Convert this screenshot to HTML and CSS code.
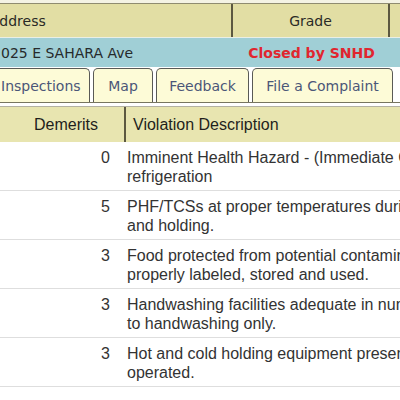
FILE: index.html
```html
<!DOCTYPE html>
<html lang="en">
<head>
<meta charset="utf-8">
<title>Inspection</title>
<link rel="stylesheet" href="styles.css">
</head>
<body>
<div class="page">
  <div class="topstrip"></div>
  <div class="summary">
    <div class="sum-row sum-head">
      <div class="col-addr">Address</div>
      <div class="col-grade">Grade</div>
      <div class="col-rest"></div>
    </div>
    <div class="sum-row sum-data">
      <div class="col-addr addr-value">025 E SAHARA Ave</div>
      <div class="col-grade closed">Closed by SNHD</div>
      <div class="col-rest"></div>
    </div>
  </div>
  <div class="tabs">
    <div class="tab tab-insp">Inspections</div>
    <div class="tab tab-map">Map</div>
    <div class="tab tab-feed">Feedback</div>
    <div class="tab tab-file">File a Complaint</div>
  </div>
  <div class="vtable">
    <div class="vrow vhead">
      <div class="dem">Demerits</div>
      <div class="desc">Violation Description</div>
    </div>
    <div class="vrow">
      <div class="dem">0</div>
      <div class="desc">Imminent Health Hazard - (Immediate Closure)<br>refrigeration</div>
    </div>
    <div class="vrow">
      <div class="dem">5</div>
      <div class="desc">PHF/TCSs at proper temperatures during<br>and holding.</div>
    </div>
    <div class="vrow">
      <div class="dem">3</div>
      <div class="desc">Food protected from potential contamination<br>properly labeled, stored and used.</div>
    </div>
    <div class="vrow">
      <div class="dem">3</div>
      <div class="desc">Handwashing facilities adequate in number<br>to handwashing only.</div>
    </div>
    <div class="vrow">
      <div class="dem">3</div>
      <div class="desc">Hot and cold holding equipment present<br>operated.</div>
    </div>
  </div>
</div>
</body>
</html>
```
FILE: styles.css
```css
html, body {
  margin: 0;
  padding: 0;
  height: 100%;
  overflow: hidden;
  background: #ffffff;
}

.page {
  margin-left: -12px;
  width: 460px;
}

.topstrip {
  height: 3px;
  background: #f4f3e4;
}

.summary {
  font-family: "DejaVu Sans", Verdana, sans-serif;
  font-size: 14px;
}

.sum-row {
  display: flex;
}

.sum-head {
  height: 33px;
  background: #e2dea4;
  border-top: 1px solid #8f8c70;
  border-bottom: 1px solid #e9efe6;
  color: #2a2a26;
}

.sum-data {
  height: 29px;
  background: #a0cfd6;
  color: #262a2c;
}

.col-addr {
  width: 245px;
  box-sizing: border-box;
  display: flex;
  align-items: center;
  padding-left: 2px;
}

.col-grade {
  width: 157px;
  box-sizing: border-box;
  display: flex;
  align-items: center;
  justify-content: center;
}

.sum-head .col-addr,
.sum-head .col-grade {
  border-right: 2px solid #5c5840;
}

.col-rest {
  flex: 1;
}

.addr-value {
  padding-left: 13px;
}

.closed {
  color: #e0262f;
  font-weight: bold;
}

.tabs {
  display: flex;
  gap: 3px;
  margin-top: 1px;
  height: 34px;
  border-bottom: 1px solid #77755f;
  font-family: "DejaVu Sans", Verdana, sans-serif;
  font-size: 14px;
}

.tab {
  box-sizing: border-box;
  height: 34px;
  background: #fdfbd7;
  border: 1px solid #5a5a56;
  border-bottom: none;
  border-radius: 5px 5px 0 0;
  color: #4b5678;
  display: flex;
  align-items: center;
  justify-content: center;
}

.tab-insp {
  width: 102px;
  justify-content: flex-start;
  padding-left: 12px;
}

.tab-map { width: 60px; }
.tab-feed { width: 93px; }
.tab-file { width: 141px; }

.vtable {
  margin-top: 3px;
  border-top: 1px solid #b3b1a2;
  font-family: "Liberation Sans", Arial, Helvetica, sans-serif;
  font-size: 16px;
  color: #333333;
}

.vrow {
  display: grid;
  grid-template-columns: 138px 1fr;
  line-height: 19px;
  padding: 6px 0 4px;
  border-bottom: 1px solid #dedede;
}

.vrow .dem {
  text-align: right;
  padding-right: 16px;
}

.vrow .desc {
  padding-left: 1px;
  white-space: nowrap;
}

.vhead {
  height: 35px;
  box-sizing: border-box;
  padding: 0;
  border-bottom: none;
  background: #e8e5b0;
  color: #1f1f1c;
  align-items: stretch;
}

.vhead .dem {
  box-sizing: border-box;
  border-right: 2px solid #5c5840;
  padding-right: 26px;
  display: flex;
  align-items: center;
  justify-content: flex-end;
}

.vhead .desc {
  padding-left: 7px;
  display: flex;
  align-items: center;
}
```
